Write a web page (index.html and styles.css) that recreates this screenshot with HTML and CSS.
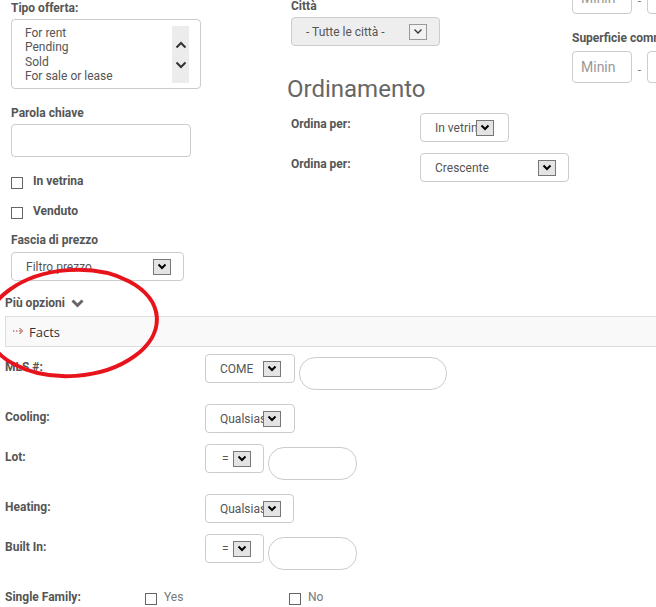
FILE: index.html
```html
<!DOCTYPE html>
<html lang="it">
<head>
<meta charset="utf-8">
<title>Ricerca</title>
<link rel="stylesheet" href="styles.css">
</head>
<body>
<div class="page">
  <div class="top">
    <div class="col col-left">
      <div class="label">Tipo offerta:</div>
      <div class="listbox">
        <div class="items">
          <div>For rent</div>
          <div>Pending</div>
          <div>Sold</div>
          <div>For sale or lease</div>
        </div>
        <div class="track">
          <svg width="12" height="8" viewBox="0 0 12 8"><path d="M1.5 6.5 L6 2 L10.5 6.5" fill="none" stroke="#333" stroke-width="2"/></svg>
          <svg width="12" height="8" viewBox="0 0 12 8"><path d="M1.5 1.5 L6 6 L10.5 1.5" fill="none" stroke="#333" stroke-width="2"/></svg>
        </div>
      </div>
      <div class="label gap-label">Parola chiave</div>
      <div class="textbox keyword"></div>
      <div class="check first"><span class="box"></span><span class="label">In vetrina</span></div>
      <div class="check"><span class="box"></span><span class="label">Venduto</span></div>
      <div class="label">Fascia di prezzo</div>
      <div class="select price"><span class="sel-text">Filtro prezzo</span><span class="btn"><svg width="10" height="7" viewBox="0 0 10 7"><path d="M1.5 1.5 L5 5 L8.5 1.5" fill="none" stroke="#000" stroke-width="2"/></svg></span></div>
    </div>
    <div class="col col-mid">
      <div class="label">Città</div>
      <div class="select city"><span class="sel-text">- Tutte le città -</span><span class="btn"><svg width="10" height="7" viewBox="0 0 10 7"><path d="M1.5 1.5 L5 5 L8.5 1.5" fill="none" stroke="#333" stroke-width="1.3"/></svg></span></div>
      <h2 class="heading">Ordinamento</h2>
      <div class="orow">
        <div class="label olabel">Ordina per:</div>
        <div class="select sort1"><span class="sel-text">In vetrina</span><span class="btn"><svg width="10" height="7" viewBox="0 0 10 7"><path d="M1.5 1.5 L5 5 L8.5 1.5" fill="none" stroke="#000" stroke-width="2"/></svg></span></div>
      </div>
      <div class="orow">
        <div class="label olabel">Ordina per:</div>
        <div class="select sort2"><span class="sel-text">Crescente</span><span class="btn"><svg width="10" height="7" viewBox="0 0 10 7"><path d="M1.5 1.5 L5 5 L8.5 1.5" fill="none" stroke="#000" stroke-width="2"/></svg></span></div>
      </div>
    </div>
    <div class="col col-right">
      <div class="label">Prezzo</div>
      <div class="range">
        <div class="textbox small"><span class="ph">Minin</span></div>
        <span class="dash">-</span>
        <div class="textbox small"><span class="ph">Max</span></div>
      </div>
      <div class="label gap-right">Superficie commerciale</div>
      <div class="range second">
        <div class="textbox small"><span class="ph">Minin</span></div>
        <span class="dash">-</span>
        <div class="textbox small"><span class="ph">Max</span></div>
      </div>
    </div>
  </div>

  <div class="more">
    <div class="more-title"><span class="label">Più opzioni</span>
      <svg class="chev" width="13" height="9" viewBox="0 0 13 9"><path d="M1.5 1.5 L6.5 6.5 L11.5 1.5" fill="none" stroke="#666" stroke-width="3"/></svg>
    </div>
    <div class="facts">
      <svg class="arrow" width="11" height="8" viewBox="0 0 11 8"><path d="M0 4 H1.5 M3 4 H4.5 M6 4 H8" stroke="#a33" stroke-width="1"/><path d="M6.5 1 L9.5 4 L6.5 7" fill="none" stroke="#a33" stroke-width="1"/></svg>
      <span>Facts</span>
    </div>

    <div class="frow tall first-row">
      <div class="label flabel">MLS #:</div>
      <div class="select w90"><span class="sel-text">COME</span><span class="btn"><svg width="10" height="7" viewBox="0 0 10 7"><path d="M1.5 1.5 L5 5 L8.5 1.5" fill="none" stroke="#000" stroke-width="2"/></svg></span></div>
      <div class="textbox round w148"></div>
    </div>
    <div class="frow">
      <div class="label flabel">Cooling:</div>
      <div class="select w90"><span class="sel-text">Qualsiasi</span><span class="btn"><svg width="10" height="7" viewBox="0 0 10 7"><path d="M1.5 1.5 L5 5 L8.5 1.5" fill="none" stroke="#000" stroke-width="2"/></svg></span></div>
    </div>
    <div class="frow tall">
      <div class="label flabel">Lot:</div>
      <div class="select w59"><span class="sel-text">=</span><span class="btn"><svg width="10" height="7" viewBox="0 0 10 7"><path d="M1.5 1.5 L5 5 L8.5 1.5" fill="none" stroke="#000" stroke-width="2"/></svg></span></div>
      <div class="textbox round w89"></div>
    </div>
    <div class="frow">
      <div class="label flabel">Heating:</div>
      <div class="select w89"><span class="sel-text">Qualsiasi</span><span class="btn"><svg width="10" height="7" viewBox="0 0 10 7"><path d="M1.5 1.5 L5 5 L8.5 1.5" fill="none" stroke="#000" stroke-width="2"/></svg></span></div>
    </div>
    <div class="frow tall">
      <div class="label flabel">Built In:</div>
      <div class="select w59"><span class="sel-text">=</span><span class="btn"><svg width="10" height="7" viewBox="0 0 10 7"><path d="M1.5 1.5 L5 5 L8.5 1.5" fill="none" stroke="#000" stroke-width="2"/></svg></span></div>
      <div class="textbox round w89"></div>
    </div>
    <div class="srow">
      <div class="label slabel">Single Family:</div>
      <div class="opt"><span class="box"></span><span class="opt-text">Yes</span></div>
      <div class="opt"><span class="box"></span><span class="opt-text">No</span></div>
    </div>
  </div>

  <svg class="circle" width="170" height="125" viewBox="0 0 170 125">
    <ellipse cx="72" cy="58" rx="85" ry="53" transform="rotate(-4 72 58)" fill="none" stroke="#e8141c" stroke-width="4"/>
  </svg>
</div>
</body>
</html>
```

FILE: styles.css
```css
html, body {
  margin: 0;
  padding: 0;
  overflow: hidden;
  background: #fff;
}
body {
  font-family: Roboto, "Liberation Sans", Arial, sans-serif;
  font-size: 12px;
  color: #555;
  width: 656px;
  height: 607px;
}
.page {
  position: relative;
  width: 656px;
  height: 607px;
  overflow: hidden;
}
.label {
  font-weight: 700;
  font-size: 12px;
  line-height: 16px;
  color: #555;
  white-space: nowrap;
}
.top {
  display: flex;
  align-items: flex-start;
  padding-left: 11px;
}
.col-left { width: 280px; flex: none; }
.col-mid { width: 281px; flex: none; margin-top: -2px; }
.col-right { flex: none; margin-top: -37px; }

.listbox {
  box-sizing: border-box;
  width: 190px;
  height: 70px;
  margin-top: 3px;
  border: 1px solid #ccc;
  border-radius: 4px;
  display: flex;
  align-items: flex-start;
}
.items {
  flex: 1;
  padding: 6px 0 0 13px;
  line-height: 14.3px;
  font-size: 12px;
  color: #555;
}
.track {
  width: 17px;
  height: 57px;
  margin: 6px 11px 0 0;
  background: #ececec;
  display: flex;
  flex-direction: column;
  align-items: center;
  justify-content: center;
  gap: 12px;
}
.track svg { display: block; }
.gap-label { margin-top: 16px; }
.textbox {
  box-sizing: border-box;
  border: 1px solid #ccc;
  border-radius: 4px;
  background: #fff;
}
.keyword {
  width: 180px;
  height: 33px;
  margin-top: 3px;
}
.check {
  display: flex;
  align-items: flex-start;
  height: 30px;
}
.check.first { margin-top: 16px; }
.check + .label { margin-top: -1px; }
.box {
  box-sizing: border-box;
  width: 12px;
  height: 12px;
  border: 1px solid #666;
  background: #fff;
  margin-top: 4px;
  flex: none;
}
.check .label { margin-left: 10px; }

.select {
  box-sizing: border-box;
  height: 29px;
  border: 1px solid #ccc;
  border-radius: 4px;
  background: #fff;
  display: flex;
  align-items: center;
  padding-left: 14px;
  padding-right: 12px;
  font-size: 12px;
  color: #555;
}
.sel-text {
  flex: 1;
  min-width: 0;
  overflow: hidden;
  white-space: nowrap;
}
.btn {
  box-sizing: border-box;
  width: 18px;
  height: 16px;
  border: 1px solid #777;
  background: #e4e4e4;
  display: flex;
  align-items: center;
  justify-content: center;
  flex: none;
}
.btn svg { display: block; }
.price { width: 173px; margin-top: 4px; }
.city {
  width: 149px;
  margin-top: 3px;
  background: #eee;
}
.city .btn { background: #f2f2f2; border-color: #999; }
.heading {
  margin: 29px 0 0 -4px;
  font-size: 24px;
  line-height: 28px;
  font-weight: 400;
  color: #666;
}
.orow {
  display: flex;
  align-items: flex-start;
  margin-top: 10px;
}
.orow + .orow { margin-top: 11px; }
.olabel { width: 129px; margin-top: 3px; flex: none; }
.sort1 { width: 89px; padding-right: 14px; }
.sort2 { width: 149px; }

.range {
  display: flex;
  align-items: center;
  margin-top: 3px;
}
.range.second { margin-top: 5px; }
.textbox.small {
  width: 60px;
  height: 32px;
  display: flex;
  align-items: center;
  padding-left: 8px;
  flex: none;
}
.ph { color: #999; font-size: 14px; }
.dash { width: 15px; text-align: center; color: #777; padding-top: 6px; font-size: 12px; }
.gap-right { margin-top: 16px; }

.more { padding-left: 5px; margin-top: 14px; }
.more-title {
  display: flex;
  align-items: center;
  height: 16px;
}
.chev { margin-left: 6px; margin-top: 1px; }
.facts {
  box-sizing: border-box;
  height: 31px;
  margin-top: 5px;
  border: 1px solid #ddd;
  border-right: none;
  background: #f9f9f9;
  display: flex;
  align-items: center;
  padding-left: 7px;
  font-family: "Open Sans", "Noto Sans", sans-serif;
  font-size: 13px;
  color: #333;
}
.arrow { margin-right: 5px; margin-top: -2px; }

.frow {
  display: flex;
  align-items: flex-start;
  height: 40px;
}
.frow.tall { height: 50px; }
.frow.first-row { margin-top: 7px; }
.flabel { width: 200px; margin-top: 5px; flex: none; }
.w90 { width: 90px; padding-right: 13px; }
.w89 { width: 89px; padding-right: 12px; }
.w59 { width: 59px; padding-left: 16px; padding-right: 12px; }
.frow .select { flex: none; }
.textbox.round {
  height: 33px;
  margin-top: 3px;
  margin-left: 4px;
  border-radius: 16px;
  flex: none;
}
.w148 { width: 148px; }
.textbox.w89 { width: 89px; }

.srow {
  display: flex;
  align-items: flex-start;
}
.slabel { width: 140px; margin-top: 5px; flex: none; }
.opt {
  width: 144px;
  display: flex;
  align-items: flex-start;
  flex: none;
}
.opt .box { margin-top: 9px; }
.opt-text { margin-left: 7px; margin-top: 5px; line-height: 16px; font-size: 12px; color: #777; }

.circle {
  position: absolute;
  left: 0;
  top: 265px;
  pointer-events: none;
}
```
